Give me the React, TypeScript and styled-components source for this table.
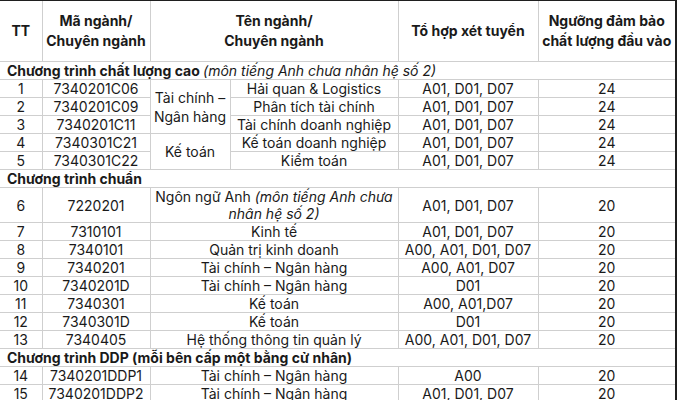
import React from "react";
import styled, { createGlobalStyle } from "styled-components";

const GlobalStyle = createGlobalStyle`
  html, body {
    margin: 0;
    padding: 0;
    background: #ffffff;
    overflow: hidden;
  }
  body {
    font-family: Inter, "Liberation Sans", "Noto Sans", sans-serif;
    color: #1a1a1a;
  }
`;

const Frame = styled.div`
  box-sizing: border-box;
  width: 677px;
  border-top: 1px solid #1f1f1f;
  border-right: 2px solid #1f1f1f;
`;

const Table = styled.table`
  width: 100%;
  table-layout: fixed;
  border-collapse: collapse;
  font-size: 14px;
  line-height: 17px;

  th,
  td {
    border: 1px solid #cfcfcf;
    padding: 0 3px;
    vertical-align: middle;
  }

  thead th {
    border-top: none;
  }

  th:first-child,
  td:first-child {
    border-left: none;
  }

  th:last-child,
  td:last-child {
    border-right: none;
  }
`;

const Head = styled.th`
  height: 60px;
  font-weight: 700;
  text-align: center;
  line-height: 20px;
`;

const BodyRow = styled.tr<{ $tall?: boolean }>`
  height: ${(props) => (props.$tall ? "35px" : "18px")};
`;

const Cell = styled.td`
  text-align: center;
`;

const GroupCell = styled.td`
  text-align: center;
  line-height: 19px;
`;

const SectionCell = styled.td`
  text-align: left;
  font-weight: 700;
  padding-left: 7px !important;
`;

const Note = styled.i`
  font-weight: 400;
`;

type Row = {
  tt: number;
  code: string;
  combo: string;
  score: number;
  name?: React.ReactNode;
  sub?: string;
  group?: { label: React.ReactNode; span: number };
  tall?: boolean;
};

type Section = {
  title: React.ReactNode;
  rows: Row[];
};

const sections: Section[] = [
  {
    title: (
      <>
        Chương trình chất lượng cao <Note>(môn tiếng Anh chưa nhân hệ số 2)</Note>
      </>
    ),
    rows: [
      {
        tt: 1,
        code: "7340201C06",
        group: { label: <>Tài chính –<br />Ngân hàng</>, span: 3 },
        sub: "Hải quan & Logistics",
        combo: "A01, D01, D07",
        score: 24,
      },
      { tt: 2, code: "7340201C09", sub: "Phân tích tài chính", combo: "A01, D01, D07", score: 24 },
      { tt: 3, code: "7340201C11", sub: "Tài chính doanh nghiệp", combo: "A01, D01, D07", score: 24 },
      {
        tt: 4,
        code: "7340301C21",
        group: { label: "Kế toán", span: 2 },
        sub: "Kế toán doanh nghiệp",
        combo: "A01, D01, D07",
        score: 24,
      },
      { tt: 5, code: "7340301C22", sub: "Kiểm toán", combo: "A01, D01, D07", score: 24 },
    ],
  },
  {
    title: "Chương trình chuẩn",
    rows: [
      {
        tt: 6,
        code: "7220201",
        name: (
          <>
            Ngôn ngữ Anh <Note>(môn tiếng Anh chưa nhân hệ số 2)</Note>
          </>
        ),
        combo: "A01, D01, D07",
        score: 20,
        tall: true,
      },
      { tt: 7, code: "7310101", name: "Kinh tế", combo: "A01, D01, D07", score: 20 },
      { tt: 8, code: "7340101", name: "Quản trị kinh doanh", combo: "A00, A01, D01, D07", score: 20 },
      { tt: 9, code: "7340201", name: "Tài chính – Ngân hàng", combo: "A00, A01, D07", score: 20 },
      { tt: 10, code: "7340201D", name: "Tài chính – Ngân hàng", combo: "D01", score: 20 },
      { tt: 11, code: "7340301", name: "Kế toán", combo: "A00, A01,D07", score: 20 },
      { tt: 12, code: "7340301D", name: "Kế toán", combo: "D01", score: 20 },
      { tt: 13, code: "7340405", name: "Hệ thống thông tin quản lý", combo: "A00, A01, D01, D07", score: 20 },
    ],
  },
  {
    title: "Chương trình DDP (mỗi bên cấp một bằng cử nhân)",
    rows: [
      { tt: 14, code: "7340201DDP1", name: "Tài chính – Ngân hàng", combo: "A00", score: 20 },
      { tt: 15, code: "7340201DDP2", name: "Tài chính – Ngân hàng", combo: "A01, D01, D07", score: 20 },
    ],
  },
];

const App = () => {
  return (
    <>
      <GlobalStyle />
      <Frame>
        <Table>
          <colgroup>
            <col style={{ width: 42 }} />
            <col style={{ width: 108 }} />
            <col style={{ width: 80 }} />
            <col style={{ width: 168 }} />
            <col style={{ width: 140 }} />
            <col />
          </colgroup>
          <thead>
            <tr>
              <Head>TT</Head>
              <Head>
                Mã ngành/
                <br />
                Chuyên ngành
              </Head>
              <Head colSpan={2}>
                Tên ngành/
                <br />
                Chuyên ngành
              </Head>
              <Head>Tổ hợp xét tuyển</Head>
              <Head>
                Ngưỡng đảm bảo
                <br />
                chất lượng đầu vào
              </Head>
            </tr>
          </thead>
          <tbody>
            {sections.map((section, si) => (
              <React.Fragment key={si}>
                <BodyRow>
                  <SectionCell colSpan={6}>{section.title}</SectionCell>
                </BodyRow>
                {section.rows.map((row) => (
                  <BodyRow key={row.tt} $tall={row.tall}>
                    <Cell>{row.tt}</Cell>
                    <Cell>{row.code}</Cell>
                    {row.name !== undefined ? (
                      <Cell colSpan={2}>{row.name}</Cell>
                    ) : (
                      <>
                        {row.group && (
                          <GroupCell rowSpan={row.group.span}>{row.group.label}</GroupCell>
                        )}
                        <Cell>{row.sub}</Cell>
                      </>
                    )}
                    <Cell>{row.combo}</Cell>
                    <Cell>{row.score}</Cell>
                  </BodyRow>
                ))}
              </React.Fragment>
            ))}
          </tbody>
        </Table>
      </Frame>
    </>
  );
};

export default App;
